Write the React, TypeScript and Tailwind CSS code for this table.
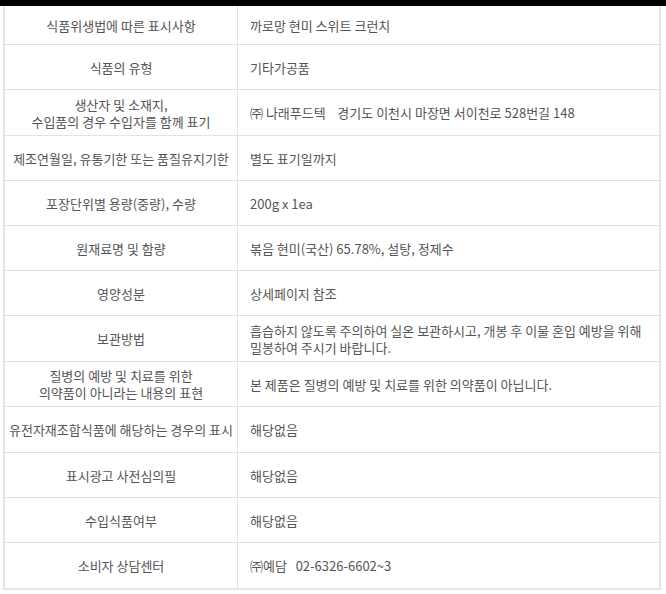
const rows: { label: string[]; value: string; h: string }[] = [
  { label: ["식품위생법에 따른 표시사항"], value: "까로망 현미 스위트 크런치", h: "h-[39px]" },
  { label: ["식품의 유형"], value: "기타가공품", h: "h-[45px]" },
  {
    label: ["생산자 및 소재지,", "수입품의 경우 수입자를 함께 표기"],
    value: "㈜ 나래푸드텍    경기도 이천시 마장면 서이천로 528번길 148",
    h: "h-[46px]",
  },
  { label: ["제조연월일, 유통기한 또는 품질유지기한"], value: "별도 표기일까지", h: "h-[45px]" },
  { label: ["포장단위별 용량(중량), 수량"], value: "200g x 1ea", h: "h-[45px]" },
  { label: ["원재료명 및 함량"], value: "볶음 현미(국산) 65.78%, 설탕, 정제수", h: "h-[45px]" },
  { label: ["영양성분"], value: "상세페이지 참조", h: "h-[45px]" },
  {
    label: ["보관방법"],
    value: "흡습하지 않도록 주의하여 실온 보관하시고, 개봉 후 이물 혼입 예방을 위해 밀봉하여 주시기 바랍니다.",
    h: "h-[46px]",
  },
  {
    label: ["질병의 예방 및 치료를 위한", "의약품이 아니라는 내용의 표현"],
    value: "본 제품은 질병의 예방 및 치료를 위한 의약품이 아닙니다.",
    h: "h-[45px]",
  },
  { label: ["유전자재조합식품에 해당하는 경우의 표시"], value: "해당없음", h: "h-[46px]" },
  { label: ["표시광고 사전심의필"], value: "해당없음", h: "h-[45px]" },
  { label: ["수입식품여부"], value: "해당없음", h: "h-[45px]" },
  { label: ["소비자 상담센터"], value: "㈜예담   02-6326-6602~3", h: "h-[45px]" },
]

export default function App() {
  return (
    <div
      className="w-[666px] h-[594px] bg-white text-[13px] leading-[17px] text-[#555] break-keep"
      style={{ fontFamily: '"Noto Sans CJK KR", "Noto Sans", sans-serif' }}
    >
      {/* top bar */}
      <div className="h-[6px] bg-black" />

      <div className="ml-[3px] w-[658px] border-x-2 border-b-2 border-[#e6e6e6]">
        {rows.map((r, i) => (
          <div
            key={i}
            className={`flex ${r.h} ${i < rows.length - 1 ? "border-b border-[#e2e2e2]" : ""}`}
          >
            <div className="w-[233px] shrink-0 border-r border-[#e2e2e2] flex flex-col items-center justify-center text-center whitespace-nowrap">
              {r.label.map((l, j) => (
                <span key={j}>{l}</span>
              ))}
            </div>
            <div className="flex-1 flex items-center pl-[12px] pr-[6px] whitespace-pre-wrap">
              {r.value}
            </div>
          </div>
        ))}
      </div>
    </div>
  )
}
